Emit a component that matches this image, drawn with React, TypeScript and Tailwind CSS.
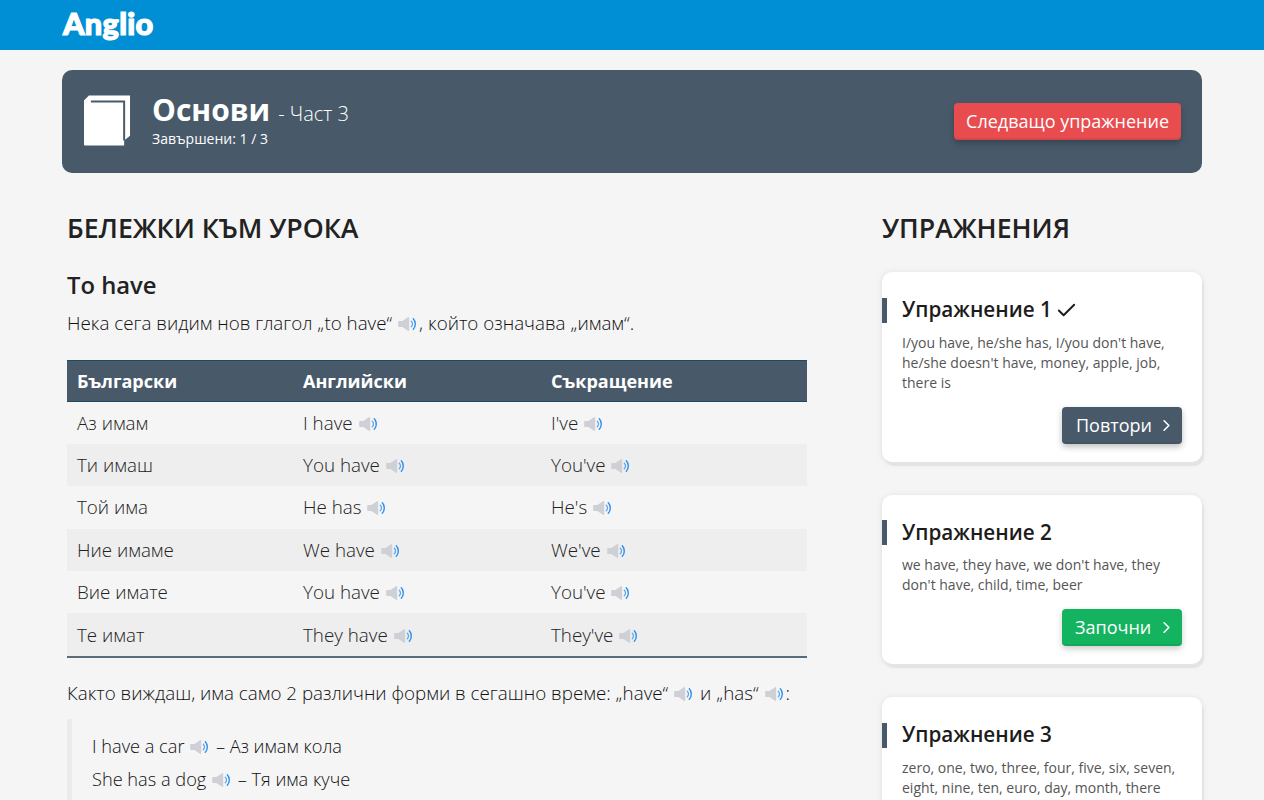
import type { ReactNode } from "react";
import { ChevronRight, Check } from "lucide-react";

const rows = [
  ["Аз имам", "I have", "I've"],
  ["Ти имаш", "You have", "You've"],
  ["Той има", "He has", "He's"],
  ["Ние имаме", "We have", "We've"],
  ["Вие имате", "You have", "You've"],
  ["Те имат", "They have", "They've"],
];

function Speaker() {
  return (
    <svg viewBox="0 0 20 16" className="mr-[1px] ml-[1px] inline-block h-4 w-5 align-[-2px]">
      <path d="M1 5h3.400L10 1.200c.6-.4 1.200-.1 1.200.6v12.400c0 .7-.6 1-1.200.6L4.400 11H1c-.5 0-.8-.3-.8-.8V5.800C.2 5.300.5 5 1 5z" fill="#cfcfd6" />
      <path d="M13.300 5.200c.8.8 1.200 1.700 1.200 2.800s-.4 2-1.200 2.800" fill="none" stroke="#5fa8ee" strokeWidth="1.300" strokeLinecap="round" />
      <path d="M15.300 2.800c1.300 1.400 2 3.200 2 5.200s-.7 3.800-2 5.200" fill="none" stroke="#2f8fee" strokeWidth="1.400" strokeLinecap="round" />
    </svg>
  );
}

function ExerciseCard({
  title,
  done,
  text,
  action,
  green,
}: {
  title: string;
  done?: boolean;
  text: ReactNode;
  action: string;
  green?: boolean;
}) {
  return (
    <div className="mb-[33px] rounded-[10px] bg-white pt-[25.500px] pb-[18px] shadow-[2px_4px_0_#e4e4e4,0_1px_6px_rgba(0,0,0,0.1)]">
      <div className="flex h-[25px] items-center border-l-[5px] border-[#485a6a] pl-[15px] text-[20.700px] font-semibold text-[#1c1c1c]">
        {title}
        {done && <Check className="ml-[3px] h-[23px] w-[23px]" strokeWidth={2} />}
      </div>
      <p className="mt-[10px] px-[20px] text-[14px] leading-[20px] text-[#555]">{text}</p>
      {action && (
        <div className="mt-[14px] flex justify-end px-[20px]">
          <button
            className={
              green
                ? "flex h-[37px] w-[120px] items-center justify-between rounded-[4px] bg-[#14b35f] pr-[6px] pl-[13px] text-[18px] text-white shadow-[inset_0_-2px_0_rgba(0,0,0,0.06),0_3px_6px_rgba(0,0,0,0.2)]"
                : "flex h-[37px] w-[120px] items-center justify-between rounded-[4px] bg-[#485a6a] pr-[6px] pl-[14px] text-[18px] text-white shadow-[inset_0_-2px_0_rgba(0,0,0,0.06),0_3px_6px_rgba(0,0,0,0.25)]"
            }
          >
            {action}
            <ChevronRight className="h-[19px] w-[19px]" strokeWidth={2} />
          </button>
        </div>
      )}
    </div>
  );
}

export default function App() {
  return (
    <div className="h-[800px] overflow-hidden bg-[#f5f5f5] font-['Open_Sans',sans-serif] text-[#222]">
      <header className="h-[50px] bg-[#008fd5]">
        <div className="mx-auto w-[1140px] pl-[1px] font-['Lato',sans-serif] text-[30.700px] leading-[47px] font-black tracking-[0.3px] text-white [-webkit-text-stroke:1.2px_white]">
          Anglio
        </div>
      </header>

      <div className="mx-auto w-[1140px]">
        <section className="mt-[20px] flex h-[103px] items-center justify-between rounded-[10px] bg-[#485a6a] pr-[21px] pl-[22px] text-white">
          <div className="flex items-center gap-[21px]">
            <svg viewBox="0 0 48 51" className="mt-[-2px] h-[51px] w-[47px]">
              <path d="M0 5 5 0h42v41l-6 5v5H1c-.6 0-1-.4-1-1z" fill="#fff" />
              <path d="M7 6h34v40" fill="none" stroke="#485a6a" strokeWidth="2" />
            </svg>
            <div className="mt-[-3px]">
              <div className="flex items-baseline gap-[8px]">
                <span className="text-[30px] leading-[38px] font-bold">Основи</span>
                <span className="text-[20px] font-light">- Част 3</span>
              </div>
              <div className="text-[14px] leading-[20px]">Завършени: 1 / 3</div>
            </div>
          </div>
          <button className="h-[37px] rounded-[4px] bg-[#e84c4f] px-[12px] text-[18px] text-white shadow-[inset_0_-2px_0_rgba(0,0,0,0.08),0_3px_6px_rgba(0,0,0,0.25)]">
            Следващо упражнение
          </button>
        </section>

        <div className="mt-[35px] flex justify-between">
          <main className="ml-[5px] w-[740px]">
            <h2 className="text-[26.700px] leading-[40px] font-semibold text-[#222]">БЕЛЕЖКИ КЪМ УРОКА</h2>
            <h3 className="mt-[22px] text-[23.800px] leading-[30px] font-semibold">To have</h3>
            <p className="mt-[9px] text-[18.800px] leading-[28px] font-light text-[#111]">
              Нека сега видим нов глагол „to have“ <Speaker />, който означава „имам“.
            </p>

            <table className="mt-[23px] w-full border-collapse text-[18.800px] font-light">
              <thead>
                <tr className="h-[41px] border-y border-[#1e4a60] bg-[#485a6a] text-left text-[18px] text-white">
                  <th className="w-[226px] pl-[10px] font-bold">Български</th>
                  <th className="w-[248px] pl-[10px] font-bold">Английски</th>
                  <th className="pl-[10px] font-bold">Съкращение</th>
                </tr>
              </thead>
              <tbody>
                {rows.map((row, i) => (
                  <tr key={i} className={i % 2 === 1 ? "h-[42.400px] bg-[#eeeeee]" : "h-[42.400px]"}>
                    <td className="pl-[10px]">{row[0]}</td>
                    <td className="pl-[10px]">
                      {row[1]} <Speaker />
                    </td>
                    <td className="pl-[10px]">
                      {row[2]} <Speaker />
                    </td>
                  </tr>
                ))}
              </tbody>
              <tfoot>
                <tr>
                  <td colSpan={3} className="h-[2px] bg-[#5a6b79] p-0"></td>
                </tr>
              </tfoot>
            </table>

            <p className="mt-[21px] text-[18.800px] leading-[28px] font-light text-[#111]">
              Както виждаш, има само 2 различни форми в сегашно време: „have“ <Speaker /> и „has“ <Speaker />:
            </p>

            <div className="mt-[12px] border-l-[5px] border-[#ebebeb] pt-[11px] pb-[20px] pl-[20px] text-[18.200px] leading-[33px] font-light text-[#111]">
              <div>
                I have a car <Speaker /> – Аз имам кола
              </div>
              <div>
                She has a dog <Speaker /> – Тя има куче
              </div>
            </div>
          </main>

          <aside className="w-[320px]">
            <h2 className="text-[26.700px] leading-[40px] font-semibold text-[#222]">УПРАЖНЕНИЯ</h2>
            <div className="mt-[24px]">
              <ExerciseCard
                title="Упражнение 1"
                done
                text="I/you have, he/she has, I/you don't have, he/she doesn't have, money, apple, job, there is"
                action="Повтори"
              />
              <ExerciseCard
                title="Упражнение 2"
                text="we have, they have, we don't have, they don't have, child, time, beer"
                action="Започни"
                green
              />
              <ExerciseCard
                title="Упражнение 3"
                text="zero, one, two, three, four, five, six, seven, eight, nine, ten, euro, day, month, there"
                action=""
              />
            </div>
          </aside>
        </div>
      </div>
    </div>
  );
}
